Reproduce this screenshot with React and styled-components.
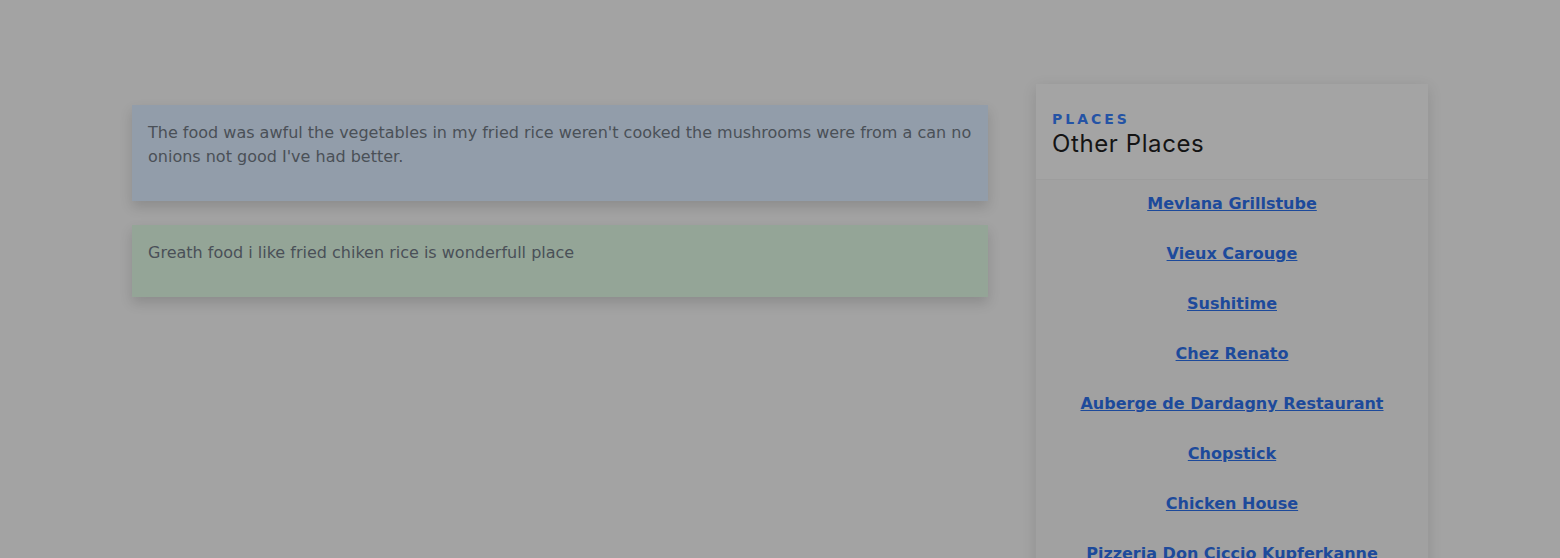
import React from "react";
import styled, { createGlobalStyle } from "styled-components";

const reviews = [
  {
    tone: "bad",
    text: "The food was awful the vegetables in my fried rice weren't cooked the mushrooms were from a can no onions not good I've had better.",
  },
  {
    tone: "good",
    text: "Greath food i like fried chiken rice is wonderfull place",
  },
];

const places = [
  "Mevlana Grillstube",
  "Vieux Carouge",
  "Sushitime",
  "Chez Renato",
  "Auberge de Dardagny Restaurant",
  "Chopstick",
  "Chicken House",
  "Pizzeria Don Ciccio Kupferkanne",
];

function App() {
  return (
    <>
      <GlobalStyle />
      <Page>
        <Container>
          <Reviews>
            {reviews.map((r, i) => (
              <Review key={i} tone={r.tone}>
                <ReviewText>{r.text}</ReviewText>
              </Review>
            ))}
          </Reviews>
          <Aside>
            <SideCard>
              <SideHeader>
                <Eyebrow>Places</Eyebrow>
                <SideTitle>Other Places</SideTitle>
              </SideHeader>
              <PlaceList>
                {places.map((p) => (
                  <PlaceItem key={p}>
                    <PlaceLink href="#">{p}</PlaceLink>
                  </PlaceItem>
                ))}
              </PlaceList>
            </SideCard>
          </Aside>
        </Container>
      </Page>
    </>
  );
}

const GlobalStyle = createGlobalStyle`
  html, body {
    margin: 0;
    padding: 0;
    background: #a3a3a3;
    overflow: hidden;
  }
  body {
    font-family: "DejaVu Sans", Verdana, sans-serif;
    font-size: 16px;
    line-height: 1.5;
    color: #4a4f55;
  }
`;

export const Page = styled.div`
  min-height: 558px;
  background: #a3a3a3;
`;

export const Container = styled.div`
  width: 1296px;
  margin: 0 auto;
  padding-top: 84px;
  display: flex;
  gap: 48px;
  align-items: flex-start;
`;

export const Reviews = styled.div`
  width: 856px;
  padding-top: 21px;
  display: flex;
  flex-direction: column;
  gap: 24px;
`;

export const Review = styled.div`
  padding: 16px;
  background: ${(p) => (p.tone === "good" ? "#94a597" : "#929daa")};
  box-shadow: 0 6px 12px rgba(0, 0, 0, 0.14);
`;

export const ReviewText = styled.p`
  margin: 0 0 16px;
  color: #4a5057;
`;

export const Aside = styled.div`
  width: 392px;
`;

export const SideCard = styled.div`
  background: #a1a1a1;
  box-shadow: 0 4px 14px rgba(0, 0, 0, 0.12);
  height: 500px;
`;

export const SideHeader = styled.div`
  padding: 26px 16px 19px;
  background: #a4a4a4;
  border-bottom: 1px solid #9d9d9d;
`;

export const Eyebrow = styled.div`
  font-family: "DejaVu Sans", sans-serif;
  font-size: 14px;
  font-weight: 700;
  letter-spacing: 3px;
  text-transform: uppercase;
  line-height: 18px;
  color: #2453a5;
`;

export const SideTitle = styled.h2`
  margin: 0;
  font-family: "Inter", "Open Sans", sans-serif;
  font-size: 24px;
  font-weight: 400;
  letter-spacing: 0.6px;
  line-height: 32px;
  color: #141414;
`;

export const PlaceList = styled.ul`
  list-style: none;
  margin: 0;
  padding: 0;
`;

export const PlaceItem = styled.li`
  padding: 12px 16px 14px;
  text-align: center;
`;

export const PlaceLink = styled.a`
  font-weight: 700;
  color: #1d4a9b;
  text-decoration: underline;
`;

export default App;
